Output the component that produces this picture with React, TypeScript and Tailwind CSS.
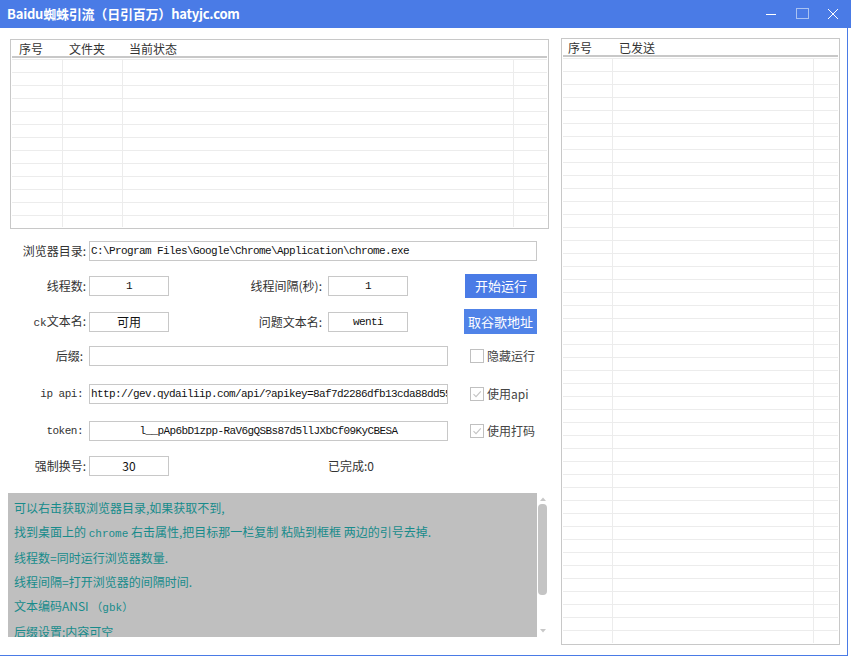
import React from 'react';

const cjk = { fontFamily: '"Noto Sans CJK SC", "Noto Sans", sans-serif' };
const mono = { fontFamily: '"Liberation Mono", "Noto Sans CJK SC", monospace' };

function Grid({ rows, cols, header }: { rows: number; cols: number[]; header: { text: string; left: number }[] }) {
  return (
    <div className="flex flex-col h-full p-[1px]">
      <div className="relative h-[15px] shrink-0 text-[12px] leading-[15px] text-[#333]">
        {header.map((h) => (
          <span key={h.text} className="absolute top-0" style={{ left: h.left }}>
            {h.text}
          </span>
        ))}
      </div>
      <div className="h-[2px] shrink-0 bg-[#c8c8c8]" />
      <div className="h-[1px] shrink-0 bg-[#ececec] mt-[1px]" />
      <div className="flex-1 overflow-hidden">
        {Array.from({ length: rows }).map((_, i) => (
          <div key={i} className="flex h-[13px] border-b border-[#ececec]">
            {cols.map((w, j) => (
              <div
                key={j}
                className={j < cols.length - 1 ? 'border-r border-[#ececec] shrink-0' : 'flex-1'}
                style={j < cols.length - 1 ? { width: w } : undefined}
              />
            ))}
          </div>
        ))}
      </div>
    </div>
  );
}

function Box({ w, children, align = 'center', font = 'mono' }: { w: number; children?: React.ReactNode; align?: 'center' | 'left'; font?: 'mono' | 'cjk' }) {
  return (
    <div
      className={`h-[20px] border border-[#c8c8c8] bg-white overflow-hidden whitespace-nowrap text-[#111] leading-[18px] shrink-0 ${
        align === 'center' ? 'text-center' : 'text-left pl-[1px]'
      } ${font === 'mono' ? 'text-[11px] tracking-[-0.6px]' : 'text-[12px]'}`}
      style={{ width: w, ...(font === 'mono' ? mono : cjk) }}
    >
      {children}
    </div>
  );
}

function Label({ w, children, m }: { w: number; children: React.ReactNode; m?: boolean }) {
  return (
    <div
      className={`shrink-0 text-right text-[#333] whitespace-nowrap ${m ? 'text-[11px] tracking-[-0.5px]' : 'text-[12px]'}`}
      style={{ width: w, ...(m ? mono : cjk) }}
    >
      {children}
    </div>
  );
}

function Check({ checked, label }: { checked?: boolean; label: string }) {
  return (
    <div className="flex items-center ml-[22px] gap-[3px]">
      <div className="w-[14px] h-[14px] border border-[#c0c0c0] bg-white flex items-center justify-center">
        {checked && (
          <svg width="10" height="10" viewBox="0 0 10 10">
            <path d="M1.5 5.2 L4 7.6 L8.8 2.4" fill="none" stroke="#c4c4c4" strokeWidth="1.1" />
          </svg>
        )}
      </div>
      <span className="text-[12px] text-[#444]" style={cjk}>
        {label}
      </span>
    </div>
  );
}

const helpLines: React.ReactNode[] = [
  '可以右击获取浏览器目录,如果获取不到,',
  <>
    找到桌面上的 <span style={mono} className="text-[11px]">chrome</span> 右击属性,把目标那一栏复制 粘贴到框框 两边的引号去掉.
  </>,
  '线程数=同时运行浏览器数量.',
  '线程间隔=打开浏览器的间隔时间.',
  <>
    文本编码ANSI <span style={mono} className="text-[11px]">（gbk）</span>
  </>,
  '后缀设置:内容可空',
];

export default function App() {
  return (
    <div className="w-[851px] h-[656px] bg-white overflow-hidden relative" style={cjk}>
      {/* title bar */}
      <div className="h-[28px] bg-[#4a7be6] flex items-center pl-[7px] text-white">
        <span className="text-[13px] font-bold tracking-[-0.2px]">Baidu蜘蛛引流（日引百万）hatyjc.com</span>
        <div className="ml-auto flex items-center h-full">
          <svg width="12" height="12" viewBox="0 0 12 12" className="mr-[19px]">
            <path d="M1 6.5 H11" stroke="#fff" strokeWidth="1" />
          </svg>
          <svg width="13" height="12" viewBox="0 0 13 12" className="mr-[18px]">
            <rect x="0.5" y="0.5" width="12" height="10" fill="none" stroke="#a9c2f2" strokeWidth="1" />
          </svg>
          <svg width="12" height="12" viewBox="0 0 12 12" className="mr-[12px]">
            <path d="M1 1 L11 11 M11 1 L1 11" stroke="#fff" strokeWidth="1" />
          </svg>
        </div>
      </div>

      <div className="flex w-[848px] h-[628px] border-r border-b border-[#4a7be6]">
        {/* left column */}
        <div className="w-[549px] shrink-0 flex flex-col">
          <div className="ml-[10px] mt-[11px] w-[539px] h-[190px] border border-[#c8c8c8]">
            <Grid
              rows={13}
              cols={[51, 60, 391, 33]}
              header={[
                { text: '序号', left: 7 },
                { text: '文件夹', left: 57 },
                { text: '当前状态', left: 117 },
              ]}
            />
          </div>

          {/* row 1 */}
          <div className="flex items-center h-[20px] mt-[12px]">
            <Label w={86}>浏览器目录:</Label>
            <div className="ml-[3px]">
              <Box w={448} align="left">
                C:\Program Files\Google\Chrome\Application\chrome.exe
              </Box>
            </div>
          </div>

          {/* row 2 */}
          <div className="flex items-center h-[24px] mt-[13px]">
            <Label w={86}>线程数:</Label>
            <div className="ml-[3px]">
              <Box w={80}>1</Box>
            </div>
            <Label w={153}>线程间隔(秒):</Label>
            <div className="ml-[6px]">
              <Box w={80}>1</Box>
            </div>
            <button className="ml-[57px] w-[72px] h-[24px] bg-[#4a7be6] text-white text-[13px]">开始运行</button>
          </div>

          {/* row 3 */}
          <div className="flex items-center h-[25px] mt-[11px]">
            <Label w={86}>
              <span style={mono} className="text-[11px]">ck</span>文本名:
            </Label>
            <div className="ml-[3px]">
              <Box w={80} font="cjk">可用</Box>
            </div>
            <Label w={153}>问题文本名:</Label>
            <div className="ml-[6px]">
              <Box w={80}>wenti</Box>
            </div>
            <button className="ml-[56px] w-[73px] h-[25px] bg-[#5083e8] text-white text-[13px]">取谷歌地址</button>
          </div>

          {/* row 4 */}
          <div className="flex items-center h-[20px] mt-[12px]">
            <Label w={83}>后缀:</Label>
            <div className="ml-[6px]">
              <Box w={359} />
            </div>
            <Check label="隐藏运行" />
          </div>

          {/* row 5 */}
          <div className="flex items-center h-[20px] mt-[18px]">
            <Label w={83} m>
              ip api:
            </Label>
            <div className="ml-[6px]">
              <Box w={359} align="left">
                http://gev.qydailiip.com/api/?apikey=8af7d2286dfb13cda88dd55
              </Box>
            </div>
            <Check checked label="使用api" />
          </div>

          {/* row 6 */}
          <div className="flex items-center h-[20px] mt-[17px]">
            <Label w={83} m>
              token:
            </Label>
            <div className="ml-[6px]">
              <Box w={359}>l__pAp6bD1zpp-RaV6gQSBs87d5llJXbCf09KyCBESA</Box>
            </div>
            <Check checked label="使用打码" />
          </div>

          {/* row 7 */}
          <div className="flex items-center h-[20px] mt-[15px]">
            <Label w={86}>强制换号:</Label>
            <div className="ml-[3px]">
              <Box w={80} font="cjk">30</Box>
            </div>
            <span className="ml-[159px] text-[12px] text-[#333]">已完成:0</span>
          </div>

          {/* help text */}
          <div className="flex ml-[8px] mt-[17px] h-[144px]">
            <div className="w-[529px] bg-[#bfbfbf] overflow-hidden pl-[6px] pt-[3px] text-[12px] leading-[24px] text-[#178b8b] whitespace-nowrap">
              {helpLines.map((l, i) => (
                <div key={i}>{l}</div>
              ))}
            </div>
            <div className="w-[11px] bg-white flex flex-col items-center">
              <svg width="8" height="6" viewBox="0 0 8 6" className="mt-[3px]">
                <path d="M1 5 L4 1.5 L7 5 Z" fill="#c8c8c8" />
              </svg>
              <div className="w-[9px] h-[91px] mt-[2px] rounded-[4px] bg-[#c4c4c4]" />
              <svg width="8" height="6" viewBox="0 0 8 6" className="mt-auto mb-[3px]">
                <path d="M1 1 L4 4.5 L7 1 Z" fill="#c8c8c8" />
              </svg>
            </div>
          </div>
        </div>

        {/* right column */}
        <div className="ml-[12px] mt-[10px] w-[279px] h-[607px] border border-[#c8c8c8]">
          <Grid
            rows={46}
            cols={[50, 201, 25]}
            header={[
              { text: '序号', left: 5 },
              { text: '已发送', left: 56 },
            ]}
          />
        </div>
      </div>
    </div>
  );
}
